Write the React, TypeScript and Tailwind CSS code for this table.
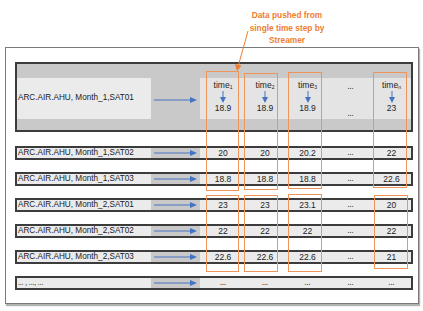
import React from "react";

const font = { fontFamily: '"Liberation Sans", Arial, sans-serif' };

function RightArrow() {
  return (
    <svg width="43" height="6" viewBox="0 0 43 6" className="block">
      <line x1="0" y1="3" x2="37" y2="3" stroke="#4472c4" strokeWidth="1" />
      <polygon points="36,0 43,3 36,6" fill="#4472c4" />
    </svg>
  );
}

function DownArrow() {
  return (
    <svg width="6" height="12" viewBox="0 0 6 12" className="block">
      <line x1="3" y1="0" x2="3" y2="7" stroke="#4472c4" strokeWidth="1" />
      <polygon points="0,6 6,6 3,12" fill="#4472c4" />
    </svg>
  );
}

const colGrid = "grid grid-cols-[42px_42px_43px_43px_1fr] pl-[2px]";

type Row = { label: string; vals: string[]; dim?: boolean };

const rows: Row[] = [
  { label: "ARC.AIR.AHU, Month_1,SAT02", vals: ["20", "20", "20.2", "...", "22"] },
  { label: "ARC.AIR.AHU, Month_1,SAT03", vals: ["18.8", "18.8", "18.8", "...", "22.6"] },
  { label: "ARC.AIR.AHU, Month_2,SAT01", vals: ["23", "23", "23.1", "...", "20"] },
  { label: "ARC.AIR.AHU, Month_2,SAT02", vals: ["22", "22", "22", "...", "22"] },
  { label: "ARC.AIR.AHU, Month_2,SAT03", vals: ["22.6", "22.6", "22.6", "...", "21"] },
  { label: "... , ..., ...", vals: ["...", "...", "...", "...", "..."], dim: true },
];

const boxes = [
  { l: 206, t: 71, w: 33, h: 120 },
  { l: 244, t: 73, w: 34, h: 117 },
  { l: 288, t: 72, w: 34, h: 117 },
  { l: 373, t: 72, w: 34, h: 116 },
  { l: 206, t: 195, w: 33, h: 77 },
  { l: 244, t: 195, w: 34, h: 77 },
  { l: 288, t: 194, w: 34, h: 78 },
  { l: 374, t: 195, w: 34, h: 74 },
];

const heads = [
  { sub: "1", v: "18.9" },
  { sub: "2", v: "18.9" },
  { sub: "3", v: "18.9" },
  null,
  { sub: "n", v: "23" },
];

export default function App() {
  return (
    <div className="relative w-[423px] h-[311px] bg-white overflow-hidden text-[#222]" style={font}>
      <div className="h-[47px]">
        <div className="ml-[227px] w-[120px] pt-[9px] text-center text-[8.3px] font-bold leading-[12.5px] text-[#ed7d31]">
          <div>Data pushed from</div>
          <div>single time step by</div>
          <div>Streamer</div>
        </div>
      </div>

      <div className="ml-[5px] w-[414px] h-[257px] border border-[#7a7a7a] shadow-[1px_2px_1px_rgba(0,0,0,0.3)] pt-[14px] pl-[9px]">
        <div className="w-[398px] h-[70px] border-2 border-[#3c3c3c] bg-[#c9c9c9] pt-[14px]">
          <div className="flex h-[41px]">
            <div className="w-[134px] bg-[#ebebeb] flex items-center pl-[1px] text-[8.2px]">
              ARC.AIR.AHU, Month_1,SAT01
            </div>
            <div className="w-[49px] flex items-center pl-[3px] pt-[3px]">
              <RightArrow />
            </div>
            <div className={`flex-1 bg-[#e4e4e4] ${colGrid}`}>
              {heads.map((h, i) =>
                h ? (
                  <div key={i} className="flex flex-col items-center pt-[2px] text-[8.5px]">
                    <div className="h-[10px] leading-[10px]">
                      time<sub className="text-[5px] align-baseline relative top-[1px]">{h.sub}</sub>
                    </div>
                    <div className="h-[13px] pt-[1px]">
                      <DownArrow />
                    </div>
                    <div className="h-[10px] leading-[10px]">{h.v}</div>
                  </div>
                ) : (
                  <div key={i} className="flex flex-col items-center pt-[4px] text-[7px] font-bold text-[#555]">
                    <div className="h-[10px] leading-[10px]">...</div>
                    <div className="h-[17px]" />
                    <div className="h-[10px] leading-[10px]">...</div>
                  </div>
                )
              )}
            </div>
          </div>
        </div>

        <div className="flex flex-col gap-[12px] mt-[14px]">
          {rows.map((r, i) => (
            <div key={i} className="w-[398px] h-[14px] border-2 border-[#3c3c3c] flex">
              <div
                className={`w-[134px] bg-[#ebebeb] pl-[1px] leading-[10px] ${
                  r.dim ? "text-[6.5px] font-bold text-[#666]" : "text-[8.2px]"
                }`}
              >
                {r.label}
              </div>
              <div className="w-[49px] bg-[#c9c9c9] flex items-center pl-[3px]">
                <RightArrow />
              </div>
              <div className={`flex-1 bg-[#ebebeb] ${colGrid}`}>
                {r.vals.map((v, j) => (
                  <div
                    key={j}
                    className={`text-center leading-[10px] ${
                      v === "..." ? "text-[7px] font-bold text-[#555]" : "text-[8.5px]"
                    }`}
                  >
                    {v}
                  </div>
                ))}
              </div>
            </div>
          ))}
        </div>
      </div>

      {boxes.map((b, i) => (
        <div
          key={i}
          className="absolute border border-[#f0955a]"
          style={{ left: b.l, top: b.t, width: b.w, height: b.h }}
        />
      ))}

      <svg className="absolute left-0 top-0" width="423" height="311" viewBox="0 0 423 311">
        <line x1="248" y1="31" x2="238.5" y2="65" stroke="#ed7d31" strokeWidth="1" />
        <polygon points="234.8,64 241.6,65.8 237,71" fill="#ed7d31" />
      </svg>
    </div>
  );
}
